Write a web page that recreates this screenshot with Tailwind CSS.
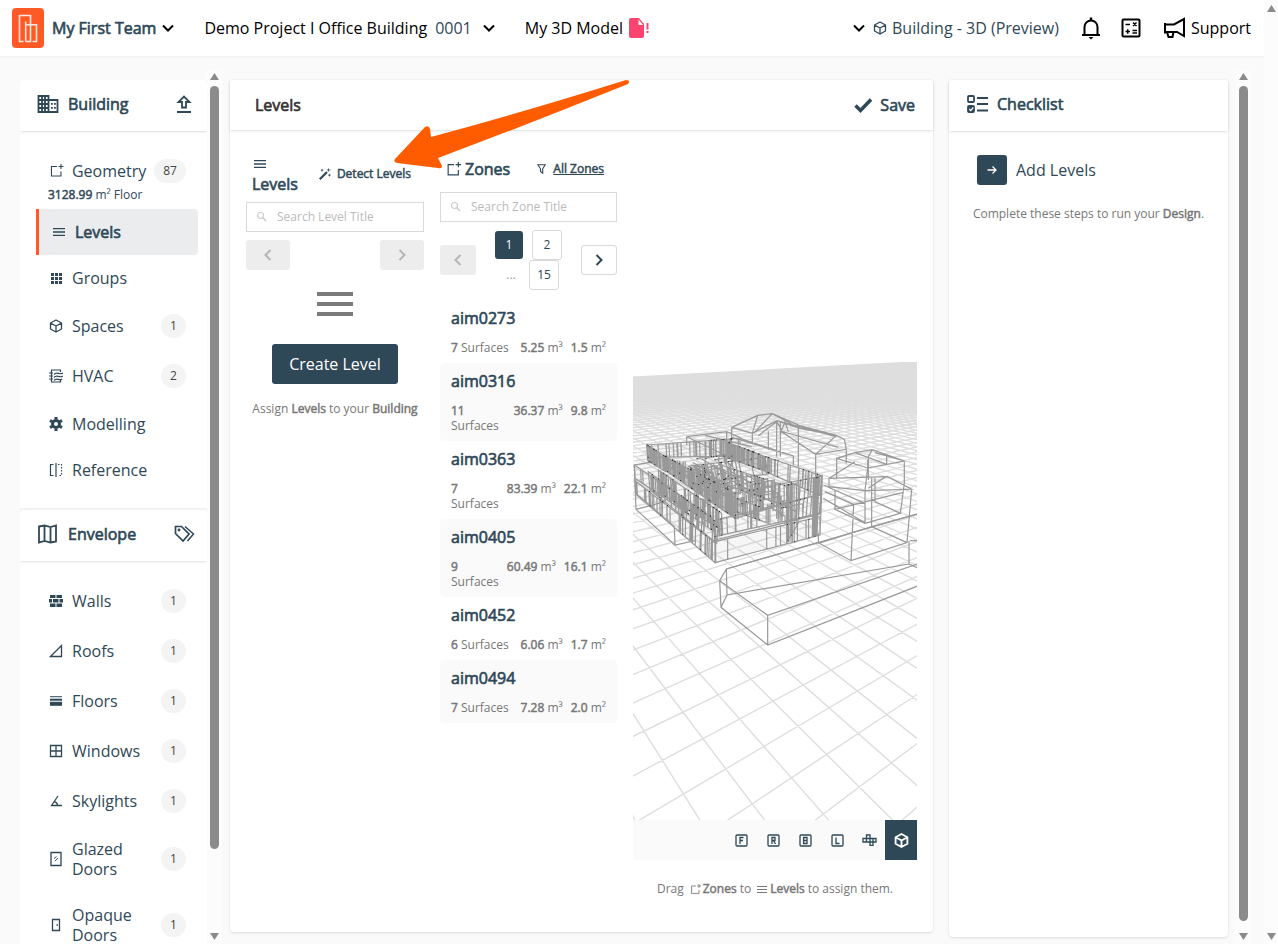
<!DOCTYPE html>
<html lang="en">
<head>
  <meta charset="UTF-8">
  <title>Levels - Demo Project</title>
  <meta name="viewport" content="width=device-width, initial-scale=1.0">

  <!-- Tailwind CSS -->
  <script src="https://cdn.jsdelivr.net/npm/@tailwindcss/browser@4"></script>

  <style>
    body { font-family: 'Open Sans', sans-serif; }
    b, h1, h2, h3, .heavy { font-weight: 400; -webkit-text-stroke: 0.04em currentColor; }
  </style>
</head>
<body class="flex h-screen overflow-hidden bg-[#fafafa] text-base leading-5 text-[#2f4858]">

  <!-- Shared icons -->
  <svg class="hidden">
    <symbol id="chevron" viewBox="0 0 12 12"><path d="M1 3.500l5 5 5-5" fill="none" stroke="currentColor" stroke-width="2"/></symbol>
    <symbol id="cube" viewBox="0 0 14 14"><path d="M7 1l5.500 3v6L7 13 1.500 10V4zM1.500 4L7 7l5.500-3M7 7v6" fill="none" stroke="currentColor" stroke-width="1.300" stroke-linejoin="round"/></symbol>
    <symbol id="zone" viewBox="0 0 14 14"><path d="M7.500 2.500H2v9.500h9.500V7.500" fill="none" stroke="currentColor" stroke-width="1.100"/><path d="M11.500 0v5M9 2.500h5" stroke="currentColor" stroke-width="1.100"/></symbol>
    <symbol id="bars" viewBox="0 0 12 8"><path d="M0 .5h12M0 4h12M0 7.500h12" stroke="currentColor" stroke-width="1.300"/></symbol>
    <symbol id="search" viewBox="0 0 12 12"><circle cx="4.500" cy="4.500" r="3" fill="none" stroke="#ccc" stroke-width="1.200"/><path d="M6.800 6.800L10 10" stroke="#ccc" stroke-width="1.600"/></symbol>
    <symbol id="left" viewBox="0 0 12 14"><path d="M8.500 2L3.500 7l5 5" fill="none" stroke="currentColor" stroke-width="2"/></symbol>
    <symbol id="right" viewBox="0 0 12 14"><path d="M3.500 2l5 5-5 5" fill="none" stroke="currentColor" stroke-width="2"/></symbol>
    <symbol id="up" viewBox="0 0 9 7"><path d="M4.500 0L9 7H0z" fill="#8b8b8b"/></symbol>
    <symbol id="down" viewBox="0 0 9 7"><path d="M4.500 7L9 0H0z" fill="#8b8b8b"/></symbol>
  </svg>

  <div class="flex min-w-0 flex-1 flex-col">
    <!-- Top bar -->
    <header class="flex h-[58px] shrink-0 items-center border-b-2 border-[#f5f5f5] bg-white pl-3 pr-[13px] text-black">
      <a href="#" aria-label="Home" class="mr-2">
        <svg class="h-10 w-8" viewBox="0 0 32 40"><rect width="32" height="40" rx="4" fill="#ff5a26"/><path d="M11.500 33.500H7.500V7.500h11v8.500M13.700 33.500V16.700h10.800v16.800h-4M13.700 33.500h4.800V17.500M13.700 24V13.500" fill="none" stroke="#fff" stroke-opacity=".85" stroke-width="1.600"/></svg>
      </a>
      <button class="flex items-center gap-[6px] text-[#2f4858]"><span class="heavy">My First Team</span><svg class="h-3 w-3 text-black"><use href="#chevron"/></svg></button>
      <button class="ml-[30px] flex items-center gap-2">Demo Project I Office Building <span class="text-[#2f4858]">0001</span><svg class="ml-[3px] h-3 w-3"><use href="#chevron"/></svg></button>
      <a href="#" class="ml-[30px] flex items-center gap-[6px]">My 3D Model
        <svg class="h-5 w-[22px]" viewBox="0 0 22 20"><path d="M2 0h8l5 6v12a2 2 0 0 1-2 2H2a2 2 0 0 1-2-2V2a2 2 0 0 1 2-2z" fill="#fb4570"/><path d="M9.500 1.500v5.500H14z" fill="#fff"/><path d="M18.500 5v6.500M18.500 13v2" stroke="#fb4570" stroke-width="2"/></svg>
      </a>
      <button class="ml-auto flex items-center text-[#2f4858]"><svg class="mr-2 h-3 w-3 text-black"><use href="#chevron"/></svg><svg class="mr-[5px] h-[14px] w-[14px]"><use href="#cube"/></svg>Building - 3D (Preview)</button>
      <button aria-label="Notifications" class="ml-[22px]"><svg class="h-6 w-5" viewBox="0 0 20 24"><path d="M1 19h18M3.500 19v-8a6.500 6.500 0 0 1 13 0v8" fill="none" stroke="#000" stroke-width="2"/><path d="M8.800 1.500h2.400v3H8.800zM7.500 21h5L10 23.500z"/></svg></button>
      <button aria-label="Calculator" class="ml-5"><svg class="h-5 w-5" viewBox="0 0 20 20"><rect x="1.500" y="1.500" width="17" height="17" rx="1" fill="none" stroke="#000" stroke-width="2"/><path d="M4.500 6.500h4.500M12 4.500l3.500 3.500M15.500 4.500L12 8M4.500 13.500H9M6.700 11.300v4.500M11.500 12.500h4.500M11.500 15h4.500" stroke="#000" stroke-width="1.500"/></svg></button>
      <a href="#" class="ml-[22px] flex items-center gap-[5px]"><svg class="h-[22px] w-[23px]" viewBox="0 0 23 22" fill="none" stroke="#000" stroke-width="2"><path d="M21 2v17L14 15H2V7.500h9zM4 15l1.500 5h4l1-5M2 6v10.500"/></svg>Support</a>
    </header>

    <div class="flex min-h-0 flex-1">
      <!-- Sidebar -->
      <nav class="mt-[22px] ml-5 w-[187px] shrink-0 overflow-hidden">
        <section class="mb-[2px] rounded-t-sm bg-white pb-[15px] shadow-xs">
          <h2 class="flex h-[51px] items-center pr-[15px] pb-[3px] pl-[17px] shadow-sm">
            <svg class="mr-[9px] h-5 w-[22px]" viewBox="0 0 22 20"><path d="M1.500 2h10v16h-10zM11.500 6h9v12h-9M1.500 6h10M1.500 10h10M1.500 14h10M5 2v16M8 2v16" fill="none" stroke="currentColor" stroke-width="1.800"/><path d="M14 9h1.800v1.800H14zM17 9h1.800v1.800H17zM14 13h1.800v1.800H14zM17 13h1.800v1.800H17z" fill="currentColor"/></svg>
            Building
            <button aria-label="Upload" class="ml-auto"><svg class="h-[18px] w-4" viewBox="0 0 16 18"><path d="M1 17h14M6 12.500V7H2.500L8 1.500 13.500 7H10v5.500z" fill="none" stroke="currentColor" stroke-width="1.800"/></svg></button>
          </h2>
          <div class="mr-[9px] ml-4 pt-[15px]">
            <a href="#" class="flex h-[50px] items-center gap-2 pr-3 pl-[13px]"><svg class="h-[14px] w-[15px]"><use href="#zone"/></svg>Geometry<span class="ml-auto flex h-6 w-8 items-center justify-center rounded-full bg-[#f4f4f4] text-xs text-[#444]">87</span></a>
            <p class="-mt-[10px] mb-[5px] pl-3 text-xs leading-[18px]"><b>3128.99</b> m² Floor</p>
            <a href="#" aria-current="page" class="flex h-[46px] items-center gap-[10px] rounded-r-sm border-l-[3px] border-[#ff5a26] bg-[#ebecee] pr-3 pl-[14px]"><svg class="h-2 w-3"><use href="#bars"/></svg><span class="heavy">Levels</span></a>
            <a href="#" class="flex h-[46px] items-center gap-[9px] pr-3 pl-[14px]"><svg class="h-[13px] w-[13px]" viewBox="0 0 13 13"><path d="M1 2.500h11M1 6.500h11M1 10.500h11" stroke="currentColor" stroke-width="3" stroke-dasharray="3 1"/></svg>Groups</a>
            <a href="#" class="flex h-[50px] items-center gap-[9px] pr-3 pl-[13px]"><svg class="h-[14px] w-[14px]"><use href="#cube"/></svg>Spaces<span class="ml-auto flex h-6 w-[25px] items-center justify-center rounded-full bg-[#f4f4f4] text-xs text-[#444]">1</span></a>
            <a href="#" class="flex h-[50px] items-center gap-[9px] pr-3 pl-[13px]"><svg class="h-[14px] w-[14px]" viewBox="0 0 14 14" fill="none" stroke="currentColor" stroke-width="1.200"><path d="M11.500 3V1h-9v12h9v-2M0 4h4M0 7h4M0 10h4M5 5.500c3-3.500 5 1 9-1.500M5 8.500c3-3.500 5 1 9-1.500M5 11.500c3-3.500 5 1 8-1.500"/></svg>HVAC<span class="ml-auto flex h-6 w-[25px] items-center justify-center rounded-full bg-[#f4f4f4] text-xs text-[#444]">2</span></a>
            <a href="#" class="flex h-[46px] items-center gap-[9px] pr-3 pl-[13px]"><svg class="h-[14px] w-[14px]" viewBox="0 0 14 14" fill="none" stroke="currentColor"><circle cx="7" cy="7" r="3.500" stroke-width="3"/><path d="M7 0v2.500M7 11.500V14M1 3.500l2.200 1.300M10.800 9.200L13 10.500M1 10.500l2.200-1.300M10.800 4.800L13 3.500" stroke-width="3"/></svg>Modelling</a>
            <a href="#" class="flex h-[46px] items-center gap-[9px] pr-3 pl-[13px]"><svg class="h-[14px] w-[14px]" viewBox="0 0 14 14" fill="none" stroke="currentColor" stroke-width="1.200"><path d="M4.500 1.500H1.500v11h3M7 0v14"/><path d="M9 1.500h3.500v11H9" stroke-dasharray="1.500 1.500"/></svg>Reference</a>
          </div>
        </section>

        <section class="rounded-t-sm bg-white pb-[15px] shadow-xs">
          <h2 class="flex h-[51px] items-center rounded-t-sm pr-3 pb-[3px] pl-[18px] shadow-sm">
            <svg class="mr-[11px] h-5 w-[19px]" viewBox="0 0 19 20"><path d="M1 2.500l5.500-1 6 1.500 5.500-1.500v16l-5.500 1-6-1.500L1 18.500zM6.500 1.500V17M12.500 3v16" fill="none" stroke="currentColor" stroke-width="1.800"/></svg>
            Envelope
            <button aria-label="Tags" class="ml-auto"><svg class="h-[18px] w-[21px]" viewBox="0 0 21 18"><path d="M1.500 1.500h6L15 9l-6 7-7.500-7.500z" fill="none" stroke="currentColor" stroke-width="1.700"/><path d="M11 1.500L19.500 9l-6 7" fill="none" stroke="currentColor" stroke-width="1.500"/><circle cx="5" cy="5" r="1.400" fill="currentColor"/></svg></button>
          </h2>
          <div class="mr-[9px] ml-4 pt-[15px]">
            <a href="#" class="flex h-[50px] items-center gap-[9px] pr-3 pl-[13px]"><svg class="h-3 w-[14px]" viewBox="0 0 14 12" fill="currentColor"><path d="M1 0h5.500v3H1zM7.500 0H13v3H7.500zM0 4h3v3.500H0zM4 4h5.500v3.500H4zM10.500 4H14v3.500h-3.500zM1 8.500h5.500V12H1zM7.500 8.500H13V12H7.500z"/></svg>Walls<span class="ml-auto flex h-6 w-[25px] items-center justify-center rounded-full bg-[#f4f4f4] text-xs text-[#444]">1</span></a>
            <a href="#" class="flex h-[50px] items-center gap-[9px] pr-3 pl-[13px]"><svg class="h-[14px] w-[14px]" viewBox="0 0 14 14"><path d="M1.500 12.500h11v-11z" fill="none" stroke="currentColor" stroke-width="1.300"/></svg>Roofs<span class="ml-auto flex h-6 w-[25px] items-center justify-center rounded-full bg-[#f4f4f4] text-xs text-[#444]">1</span></a>
            <a href="#" class="flex h-[50px] items-center gap-[9px] pr-3 pl-[13px]"><svg class="h-[10px] w-[14px]" viewBox="0 0 14 10"><path d="M1 .7h12" stroke="currentColor" stroke-width="1"/><path d="M1 3.700h12" stroke="currentColor" stroke-width="2"/><path d="M1 7.800h12" stroke="currentColor" stroke-width="4"/></svg>Floors<span class="ml-auto flex h-6 w-[25px] items-center justify-center rounded-full bg-[#f4f4f4] text-xs text-[#444]">1</span></a>
            <a href="#" class="flex h-[50px] items-center gap-[9px] pr-3 pl-[13px]"><svg class="h-[14px] w-[14px]" viewBox="0 0 14 14"><path d="M1.500 1.500h11v11h-11zM7 1.500v11M1.500 7h11" fill="none" stroke="currentColor" stroke-width="1.300"/></svg>Windows<span class="ml-auto flex h-6 w-[25px] items-center justify-center rounded-full bg-[#f4f4f4] text-xs text-[#444]">1</span></a>
            <a href="#" class="flex h-[50px] items-center gap-[9px] pr-3 pl-[13px]"><svg class="h-[14px] w-[14px]" viewBox="0 0 14 14"><path d="M9 2L2.500 11.500H13M5 7.500c2 .5 3.500 2 3.500 4" fill="none" stroke="currentColor" stroke-width="1.300"/></svg>Skylights<span class="ml-auto flex h-6 w-[25px] items-center justify-center rounded-full bg-[#f4f4f4] text-xs text-[#444]">1</span></a>
            <a href="#" class="flex h-[66px] items-center gap-[9px] pr-3 pl-[13px]"><svg class="h-4 w-[14px] shrink-0" viewBox="0 0 14 16"><path d="M2 1.500h10v13H2z" fill="none" stroke="currentColor" stroke-width="1.300"/><path d="M5 7.500l2.500-2M6 10l3-3" stroke="currentColor"/></svg><span class="w-16">Glazed Doors</span><span class="ml-auto flex h-6 w-[25px] items-center justify-center rounded-full bg-[#f4f4f4] text-xs text-[#444]">1</span></a>
            <a href="#" class="flex h-[66px] items-center gap-[9px] pr-3 pl-[13px]"><svg class="h-[14px] w-[14px] shrink-0" viewBox="0 0 14 14"><path d="M3.500 1.500h7v11h-7zM7.500 7h1.500" fill="none" stroke="currentColor" stroke-width="1.300"/></svg><span class="w-16">Opaque Doors</span><span class="ml-auto flex h-6 w-[25px] items-center justify-center rounded-full bg-[#f4f4f4] text-xs text-[#444]">1</span></a>
          </div>
        </section>
      </nav>
      <div class="mt-3 mr-2 flex w-[15px] shrink-0 flex-col items-center bg-[#fcfcfc] pt-[3px] pb-1">
        <svg class="h-[7px] w-[9px]"><use href="#up"/></svg>
        <div class="mt-[6px] h-[88%] w-[9px] rounded-full bg-[#8b8b8b]"></div>
        <svg class="mt-auto h-[7px] w-[9px]"><use href="#down"/></svg>
      </div>

      <!-- Levels panel -->
      <main class="mt-[22px] mb-3 flex min-w-0 flex-1 flex-col rounded-sm bg-white shadow-sm">
        <div class="flex h-[50px] shrink-0 items-center justify-between pr-[18px] pl-[25px] shadow-sm">
          <h1 class="text-[#333]">Levels</h1>
          <button class="heavy flex items-center gap-[7px]"><svg class="h-4 w-[19px]" viewBox="0 0 19 16"><path d="M1.500 8.500l5 5L17 2.500" fill="none" stroke="currentColor" stroke-width="3.500"/></svg>Save</button>
        </div>
        <div class="grid min-h-0 flex-1 grid-cols-[178fr_177fr_284fr] gap-4 px-4 pt-6">

          <section>
            <div class="flex items-center justify-between pr-[13px] pl-[6px]">
              <h2><svg class="my-[6px] ml-[2px] h-2 w-3"><use href="#bars"/></svg>Levels</h2>
              <button class="heavy flex items-center gap-[6px] text-xs"><svg class="h-3 w-3" viewBox="0 0 12 12"><path d="M.8 11.200L8 4" stroke="currentColor" stroke-width="2.200"/><path d="M3 1v2.500M1.800 2.200h2.500M9.500.5v3M8 2h3.500M10.500 6v2.500M9.200 7.200h2.500" stroke="currentColor" stroke-width=".8"/></svg>Detect Levels</button>
            </div>
            <label class="mt-2 flex h-[30px] items-center gap-[9px] border border-[#d9d9d9] pl-[9px]"><svg class="h-3 w-3 shrink-0"><use href="#search"/></svg><input type="text" aria-label="Search levels" placeholder="Search Level Title" class="w-full min-w-0 text-xs outline-none placeholder:text-[#bbb]"></label>
            <div class="mt-2 flex justify-between text-[#b5b5b5]">
              <button aria-label="Previous levels" class="flex h-[30px] w-11 items-center justify-center rounded-[3px] bg-[#ededed]"><svg class="h-[14px] w-3"><use href="#left"/></svg></button>
              <button aria-label="Next levels" class="flex h-[30px] w-11 items-center justify-center rounded-[3px] bg-[#ededed]"><svg class="h-[14px] w-3"><use href="#right"/></svg></button>
            </div>
            <div class="mt-[22px] flex flex-col items-center">
              <svg class="h-6 w-9" viewBox="0 0 36 24"><path d="M0 2h36M0 12h36M0 22h36" stroke="#7b7b7b" stroke-width="4"/></svg>
              <button class="mt-7 h-10 rounded-[3px] bg-[#2f4858] px-[17px] text-white">Create Level</button>
              <p class="mt-4 text-xs leading-[18px] whitespace-nowrap text-[#777]">Assign <b>Levels</b> to your <b>Building</b></p>
            </div>
          </section>

          <section>
            <div class="mt-[5px] flex items-center justify-between pr-[13px] pl-[6px]">
              <h2 class="flex items-center gap-1"><svg class="h-[15px] w-[15px]"><use href="#zone"/></svg>Zones</h2>
              <a href="#" class="heavy flex items-center gap-[7px] text-xs"><svg class="h-[10px] w-[9px]" viewBox="0 0 9 10"><path d="M.8.8h7.400L5.700 4.800V9.200L3.500 7.500V4.800z" fill="none" stroke="currentColor" stroke-width="1.100"/></svg><span class="underline">All Zones</span></a>
            </div>
            <label class="mt-[13px] flex h-[30px] items-center gap-[9px] border border-[#d9d9d9] pl-[9px]"><svg class="h-3 w-3 shrink-0"><use href="#search"/></svg><input type="text" aria-label="Search zones" placeholder="Search Zone Title" class="w-full min-w-0 text-xs outline-none placeholder:text-[#bbb]"></label>
            <div class="mt-2 flex items-center justify-between">
              <button aria-label="Previous zones" class="flex h-[30px] w-9 items-center justify-center rounded-[3px] bg-[#ededed] text-[#b5b5b5]"><svg class="h-[14px] w-3"><use href="#left"/></svg></button>
              <div class="text-xs">
                <div class="flex items-center justify-center gap-[9px]">
                  <button class="h-7 w-7 rounded-[3px] bg-[#2f4858] text-white">1</button>
                  <button class="h-[30px] w-[30px] rounded-[3px] border border-[#d9d9d9]">2</button>
                </div>
                <div class="flex items-center justify-center gap-[9px]">
                  <span class="w-[22px] pl-1 text-center text-[#999]">...</span>
                  <button class="h-[30px] w-[30px] rounded-[3px] border border-[#d9d9d9]">15</button>
                </div>
              </div>
              <button aria-label="Next zones" class="flex h-[30px] w-9 items-center justify-center rounded-[3px] border border-[#d9d9d9]"><svg class="h-[14px] w-3"><use href="#right"/></svg></button>
            </div>

            <ul class="mt-[10px] text-xs leading-[15px] text-[#777]">
              <li class="px-[11px] py-2"><h3 class="text-base leading-5 text-[#2f4858]">aim0273</h3><p class="mt-3 flex gap-2"><span class="flex-1"><b>7</b> Surfaces</span><span class="whitespace-nowrap"><b>5.25</b> m³</span><span class="whitespace-nowrap"><b>1.5</b> m²</span></p></li>
              <li class="rounded-sm bg-[#fafafa] px-[11px] py-2"><h3 class="text-base leading-5 text-[#2f4858]">aim0316</h3><p class="mt-3 flex gap-2"><span class="flex-1"><b>11</b> Surfaces</span><span class="whitespace-nowrap"><b>36.37</b> m³</span><span class="whitespace-nowrap"><b>9.8</b> m²</span></p></li>
              <li class="px-[11px] py-2"><h3 class="text-base leading-5 text-[#2f4858]">aim0363</h3><p class="mt-3 flex gap-2"><span class="flex-1"><b>7</b> Surfaces</span><span class="whitespace-nowrap"><b>83.39</b> m³</span><span class="whitespace-nowrap"><b>22.1</b> m²</span></p></li>
              <li class="rounded-sm bg-[#fafafa] px-[11px] py-2"><h3 class="text-base leading-5 text-[#2f4858]">aim0405</h3><p class="mt-3 flex gap-2"><span class="flex-1"><b>9</b> Surfaces</span><span class="whitespace-nowrap"><b>60.49</b> m³</span><span class="whitespace-nowrap"><b>16.1</b> m²</span></p></li>
              <li class="px-[11px] py-2"><h3 class="text-base leading-5 text-[#2f4858]">aim0452</h3><p class="mt-3 flex gap-2"><span class="flex-1"><b>6</b> Surfaces</span><span class="whitespace-nowrap"><b>6.06</b> m³</span><span class="whitespace-nowrap"><b>1.7</b> m²</span></p></li>
              <li class="rounded-sm bg-[#fafafa] px-[11px] py-2"><h3 class="text-base leading-5 text-[#2f4858]">aim0494</h3><p class="mt-3 flex gap-2"><span class="flex-1"><b>7</b> Surfaces</span><span class="whitespace-nowrap"><b>7.28</b> m³</span><span class="whitespace-nowrap"><b>2.0</b> m²</span></p></li>
            </ul>
          </section>

          <!-- 3D view -->
          <section class="flex flex-col justify-end pb-[34px]">
            <svg class="w-full" viewBox="0 0 284 458" fill="none" role="img" aria-label="Wireframe of the building">
              <linearGradient id="haze" gradientUnits="userSpaceOnUse" x1="0" y1="38" x2="0" y2="66"><stop stop-color="#e0e0e0"/><stop offset="1" stop-color="#e0e0e0" stop-opacity="0"/></linearGradient>
              <path d="M0 15L284 0V66H0z" fill="url(#haze)"/>
              <path id="grid" transform="translate(-8 288) scale(.33333)" stroke="#dedede" stroke-width="4.200"/>
              <g transform="translate(-8 -12) scale(.33333)" stroke="#999" stroke-width="3.600">
                <!-- neighbouring buildings -->
                <path d="M320 232L398 196L442 191L524 227L634 256L658 268L664 298L572 313L466 243M320 232V262L505 318M320 232L382 250L455 212M572 313V390M664 298V340M398 196L382 250V285M455 212L524 235L634 256L572 313M455 212V320M466 215V320M520 228V350M430 243V300M400 257L455 215L470 240L480 215L490 245M390 245L442 191M466 243L640 292M455 212L634 260M442 191L500 222M185 260L305 245L345 262V285M185 260V285M305 245V270M185 260L330 330M345 265L505 318V345M240 256L380 290"/>
                <path d="M635 325L690 308L742 299L838 333L728 354L635 325V385M838 333V400L826 490M728 354L720 422V520M742 299L730 320V390M690 308L785 343M785 320V343M750 308L838 333M690 335L612 385V410L720 422L860 418L788 380L612 385M728 330V370M785 378L730 415M740 385V530M750 385V455L826 490L720 520L630 478L735 452M595 405L720 460M595 445L720 518M630 420V478M686 464L832 428M860 418L846 578L678 632L580 578V548M686 464L678 632M686 464L600 425M740 530L846 578M740 530L876 492M740 530L580 580"/>
                <path d="M304 657L878 492M304 657L284 692L428 796L878 642M284 692L288 772L428 885L878 708M428 796V885M304 657L306 735L288 772M306 735L852 642M852 572V642L878 654M855 572H878"/>
                <path d="M28 345L75 337M28 345L33 478L150 585L210 572M150 585L148 530L33 430M33 478L120 455M580 578L304 657"/>
                <!-- main building, studs are added by the script below -->
                <path fill="#888" fill-opacity=".08" stroke="none" d="M65 285L340 265L592 378L585 555L270 638L30 430L28 345z"/>
                <path fill="#999" fill-opacity=".55" stroke="none" d="M65 285L118 318L330 430V505L122 362L68 332zM285 268L415 318V362L285 315zM485 405L502 400V575H485z"/>
                <path id="studs"/>
                <path id="joints" stroke="#222" stroke-width="3"/>
              </g>
            </svg>
            <div class="flex h-10 justify-end bg-[#fafafa]">
              <button aria-label="Front" class="flex w-8 items-center justify-center"><svg class="h-[13px] w-[13px]" viewBox="0 0 13 13" fill="none" stroke="currentColor" stroke-width="1.300"><rect x="1" y="1" width="11" height="11" rx="1"/><path d="M5 10V3.500h3.500M5 6.500h3"/></svg></button>
              <button aria-label="Right" class="flex w-8 items-center justify-center"><svg class="h-[13px] w-[13px]" viewBox="0 0 13 13" fill="none" stroke="currentColor" stroke-width="1.300"><rect x="1" y="1" width="11" height="11" rx="1"/><path d="M5 10V3.500h3v3H5M6.500 6.500L8.500 10"/></svg></button>
              <button aria-label="Back" class="flex w-8 items-center justify-center"><svg class="h-[13px] w-[13px]" viewBox="0 0 13 13" fill="none" stroke="currentColor" stroke-width="1.300"><rect x="1" y="1" width="11" height="11" rx="1"/><path d="M4.600 3.500h3.400v6H4.600zM4.600 6.500H8"/></svg></button>
              <button aria-label="Left" class="flex w-8 items-center justify-center"><svg class="h-[13px] w-[13px]" viewBox="0 0 13 13" fill="none" stroke="currentColor" stroke-width="1.300"><rect x="1" y="1" width="11" height="11" rx="1"/><path d="M5 3.500v6h3.500"/></svg></button>
              <button aria-label="Unfolded" class="flex w-8 items-center justify-center"><svg class="h-3 w-[15px]" viewBox="0 0 15 12" fill="none" stroke="currentColor" stroke-width="1.300"><path d="M1 4.500h13v3.500H1zM4.500 8V1h3.500v10.500h3V4.500M4.500 1h3.500"/></svg></button>
              <button aria-label="3D view" class="flex w-8 items-center justify-center bg-[#2f4858] text-white"><svg class="h-[15px] w-[15px]" viewBox="0 0 14 14" fill="none" stroke="currentColor" stroke-width="1.700"><path d="M7 1l5.500 3v6L7 13 1.500 10V4zM1.500 4L7 7l5.500-3M7 7v6"/></svg></button>
            </div>
            <p class="mt-5 flex items-center justify-center text-xs leading-[18px] whitespace-nowrap text-[#777]">Drag <svg class="mr-[2px] ml-[6px] h-[11px] w-[11px]"><use href="#zone"/></svg><b class="mr-[3px]">Zones</b> to <svg class="mr-[3px] ml-[6px] h-[7px] w-[10px]" viewBox="0 0 10 7"><path d="M0 .5h10M0 3.500h10M0 6.500h10" stroke="currentColor"/></svg><b class="mr-[3px]">Levels</b> to assign them.</p>
          </section>
        </div>
      </main>

      <!-- Checklist -->
      <aside class="mt-[22px] mr-2 mb-[7px] ml-4 w-[279px] shrink-0 rounded-sm bg-white shadow-sm">
        <h2 class="flex h-[51px] items-center gap-[9px] pb-[3px] pl-[18px] shadow-sm">
          <svg class="h-[18px] w-[21px]" viewBox="0 0 21 18" fill="none" stroke="currentColor"><rect x="1" y="1" width="6" height="6" rx="1" stroke-width="1.800"/><rect x="1" y="11" width="6" height="6" rx="1" fill="currentColor" stroke-width="1.800"/><path d="M2.300 14l1.500 1.500 2.500-3" stroke="#fff" stroke-width="1.200"/><path d="M10 3h11M10 9h11M10 15.500h11" stroke-width="2"/></svg>
          Checklist
        </h2>
        <div class="flex items-center gap-[9px] pt-6 pl-7">
          <button aria-label="Go to levels" class="flex h-[30px] w-[30px] items-center justify-center rounded-[3px] bg-[#2f4858]"><svg class="h-[10px] w-[10px]" viewBox="0 0 10 10"><path d="M.5 5H9M5.500 1.500L9 5 5.500 8.500" fill="none" stroke="#fff" stroke-width="1.300"/></svg></button>
          Add Levels
        </div>
        <p class="mt-5 text-center text-xs leading-[18px] text-[#777]">Complete these steps to run your <b>Design</b>.</p>
      </aside>
      <div class="mt-3 mr-[13px] flex w-[15px] shrink-0 flex-col items-center bg-[#fcfcfc] pt-[3px] pb-1">
        <svg class="h-[7px] w-[9px]"><use href="#up"/></svg>
        <div class="mt-[6px] mb-3 w-[9px] flex-1 rounded-full bg-[#8b8b8b]"></div>
        <svg class="h-[7px] w-[9px]"><use href="#down"/></svg>
      </div>
    </div>
  </div>

  <!-- Page scroll bar -->
  <div class="flex w-[14px] shrink-0 flex-col items-center justify-between bg-[#fcfcfc] pt-[5px] pb-1">
    <svg class="h-[7px] w-[9px]"><use href="#up"/></svg>
    <svg class="h-[7px] w-[9px]"><use href="#down"/></svg>
  </div>

  <!-- Arrow pointing at Detect Levels -->
  <svg class="pointer-events-none absolute top-[79px] left-[394px] h-[91px] w-[236px]" viewBox="0 0 236 91"><path d="M1 80L31 48Q35 46 36 50L37 58Q130 33 232 1Q237 1 234 5Q140 43 44 79L48 87Q48 90 44 89L3 84Q-1 83 1 80z" fill="#ff5c00"/></svg>

  <script>
    // ground plane: grid cell (i, j) to view coordinates
    function ground(i, j) {
      const w = 1 + 0.05345 * i - 0.0696 * j;
      const x = (134.35 * i + 51.23 * j + 112) / w;
      const y = (-50.89 * i + 70.88 * j + 331) / w;
      return x.toFixed(1) + " " + y.toFixed(1);
    }

    let grid = "";
    for (let i = -3; i <= 110; i++) grid += "M" + ground(i, -69) + "L" + ground(i, 8);
    for (let j = -69; j <= 8; j++) grid += "M" + ground(-3, j) + "L" + ground(110, j);
    document.getElementById("grid").setAttribute("d", grid);

    // walls: top left, top right, bottom left, bottom right, number of studs
    const walls = [
      [65, 285, 340, 265, 68, 322, 340, 318, 34],
      [65, 285, 118, 318, 68, 332, 122, 365, 24],
      [118, 318, 330, 430, 122, 362, 330, 505, 90],
      [285, 268, 415, 318, 285, 315, 415, 362, 50],
      [415, 318, 592, 378, 415, 362, 588, 438, 30],
      [195, 348, 420, 322, 205, 400, 430, 372, 26],
      [28, 345, 265, 505, 30, 385, 268, 545, 44],
      [30, 392, 272, 580, 32, 432, 270, 638, 40],
      [100, 360, 290, 490, 105, 430, 290, 540, 50],
      [70, 365, 280, 520, 75, 420, 275, 580, 30],
      [265, 512, 590, 432, 268, 560, 585, 490, 20],
      [330, 430, 590, 378, 330, 505, 585, 432, 14],
      [210, 400, 430, 480, 210, 440, 430, 520, 26],
      [285, 345, 490, 410, 290, 400, 490, 470, 34],
      [485, 405, 520, 398, 485, 578, 520, 520, 14],
      [565, 385, 592, 378, 562, 560, 585, 555, 8],
      [270, 575, 585, 500, 270, 638, 585, 555, 10]
    ];

    let seed = 7;
    function rand() {
      seed = (seed * 16807) % 2147483647;
      return seed / 2147483647;
    }

    let studs = "";
    let joints = "";
    walls.forEach(function (w) {
      studs += `M${w[0]} ${w[1]}L${w[2]} ${w[3]}L${w[6]} ${w[7]}L${w[4]} ${w[5]}Z`;
      for (let n = 0; n < w[8]; n++) {
        const t = rand();
        const x1 = w[0] + (w[2] - w[0]) * t, y1 = w[1] + (w[3] - w[1]) * t;
        const x2 = w[4] + (w[6] - w[4]) * t, y2 = w[5] + (w[7] - w[5]) * t;
        studs += `M${x1} ${y1}L${x2} ${y2}`;
        if (n % 4 === 0) joints += `M${x1} ${y1}h3`;
        if (n % 8 === 0) joints += `M${x2} ${y2}h3`;
      }
    });

    // partitions between the outer walls
    for (let n = 0; n < 110; n++) {
      const u = rand(), v = rand();
      const x = 95 + 200 * u + 210 * v, y = 330 + 130 * u - 25 * v + 45 * u * v;
      const len = 20 + 45 * rand();
      if (n % 3 === 0) studs += `M${x} ${y}l${len} ${-len * 0.2}v30`;
      else if (n % 3 === 1) studs += `M${x} ${y}l${len} ${len * 0.6}v25`;
      else studs += `M${x} ${y}v${len}M${x + 6} ${y}v${len}`;
      if (n % 3 === 0) joints += `M${x} ${y}h3`;
    }
    studs += "M262 510V630M272 510V638M592 378L585 555M582 378L575 555M270 570L585 492";
    document.getElementById("studs").setAttribute("d", studs);
    document.getElementById("joints").setAttribute("d", joints);
  </script>
</body>
</html>
